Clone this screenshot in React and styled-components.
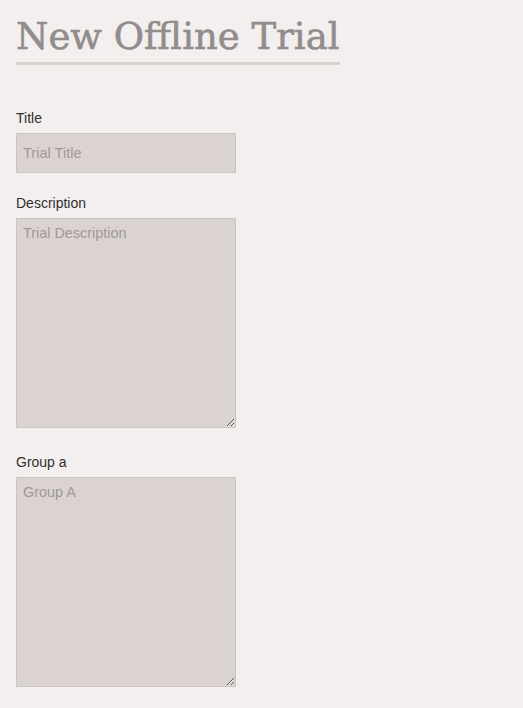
import React from 'react';
import styled, { createGlobalStyle } from 'styled-components';

const GlobalStyle = createGlobalStyle`
  html, body {
    margin: 0;
    background: #f3efee;
  }
  body {
    font-family: "Liberation Sans", Arial, sans-serif;
    color: #333;
  }
`;

const Page = styled.div`
  padding: 14px 16px 16px;
`;

const Heading = styled.h1`
  display: inline-block;
  margin: 0 0 45px;
  padding-bottom: 2px;
  font-family: "DejaVu Serif", serif;
  font-weight: normal;
  font-size: 37px;
  line-height: 46px;
  color: #928d8c;
  -webkit-text-stroke: 0.6px #928d8c;
  border-bottom: 3px solid #d9d2ce;
`;

const Field = styled.div`
  margin-bottom: ${p => (p.$tall ? '26px' : '22px')};
`;

const Label = styled.label`
  display: block;
  font-size: 14px;
  line-height: 17px;
  margin-bottom: 6px;
  color: #2f2f2f;
`;

const Input = styled.input`
  box-sizing: border-box;
  display: block;
  width: 220px;
  height: 40px;
  padding: 0 6px;
  border: 1px solid #cbc6c4;
  background: #dbd3d0;
  font-family: "Liberation Sans", Arial, sans-serif;
  font-size: 14.6px;
  color: #555;
  &::placeholder { color: #9f9996; }
`;

const TextArea = styled.textarea`
  box-sizing: border-box;
  display: block;
  width: 220px;
  height: 210px;
  padding: 6px 6px;
  border: 1px solid #cbc6c4;
  background: #dbd3d0;
  font-family: "Liberation Sans", Arial, sans-serif;
  font-size: 14.4px;
  color: #555;
  &::placeholder { color: #9f9996; }
`;

export default function App() {
  return (
    <Page>
      <GlobalStyle />
      <Heading>New Offline Trial</Heading>
      <Field>
        <Label>Title</Label>
        <Input placeholder="Trial Title" />
      </Field>
      <Field $tall>
        <Label>Description</Label>
        <TextArea placeholder="Trial Description" />
      </Field>
      <Field $tall>
        <Label>Group a</Label>
        <TextArea placeholder="Group A" />
      </Field>
    </Page>
  );
}
